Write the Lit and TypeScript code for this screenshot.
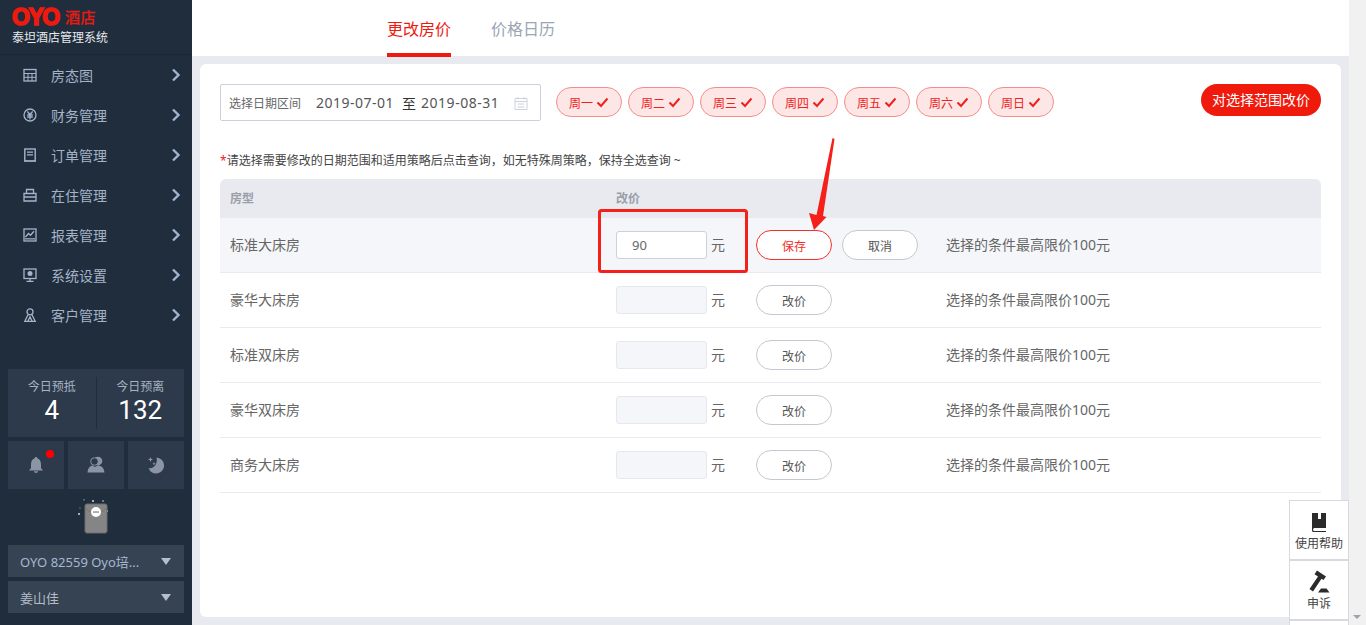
import { LitElement, css, html, svg } from "lit";
import { customElement } from "lit/decorators.js";

const navIcons = [
  svg`<rect x="1" y="1.500" width="12" height="11.500" fill="none" stroke="currentColor" stroke-width="1.300"/><path d="M1 5.500h12M5 5.500v7.500M9 5.500v7.500M1 9.300h12" stroke="currentColor" fill="none"/>`,
  svg`<circle cx="7" cy="7" r="6" fill="none" stroke="currentColor" stroke-width="1.300"/><path d="M4.400 3.500 7 6.500l2.600-3M4.200 7h5.600M4.200 9h5.600M7 6.500V11.500" fill="none" stroke="currentColor" stroke-width="1.300"/>`,
  svg`<rect x="1.800" y="1" width="10.400" height="12" fill="none" stroke="currentColor" stroke-width="1.400"/><path d="M4 4.200h6M4 6.800h6M1 13h12" stroke="currentColor" stroke-width="1.200" fill="none"/>`,
  svg`<path d="M3.500 5V1.500h7V5M1 5.500h12v7.500H1zM1 9h12" fill="none" stroke="currentColor" stroke-width="1.300"/>`,
  svg`<rect x="1" y="1" width="12" height="12" fill="none" stroke="currentColor" stroke-width="1.300"/><path d="M2.500 9 5.500 5.500l2 1.800 3.500-4M2 10.800h10" fill="none" stroke="currentColor" stroke-width="1.300"/>`,
  svg`<rect x="1" y="1" width="12" height="9.500" fill="none" stroke="currentColor" stroke-width="1.300"/><circle cx="7" cy="5.500" r="2.500" fill="currentColor"/><path d="M7 10.500v3M3.500 13.300h7" stroke="currentColor" stroke-width="1.300"/>`,
  svg`<circle cx="7" cy="3.800" r="3" fill="none" stroke="currentColor" stroke-width="1.300"/><path d="M5 6.800 1.800 13.300h10.400L9 6.800M4.800 13.300 7 9l2.200 4.300" fill="none" stroke="currentColor" stroke-width="1.300"/>`,
];

const navItems = ["房态图", "财务管理", "订单管理", "在住管理", "报表管理", "系统设置", "客户管理"];
const weekDays = ["周一", "周二", "周三", "周四", "周五", "周六", "周日"];
const rooms = ["标准大床房", "豪华大床房", "标准双床房", "豪华双床房", "商务大床房"];

@customElement("side-bar")
class SideBar extends LitElement {
  static styles = css`
    :host {
      display: flex;
      flex-direction: column;
      flex: none;
      width: 192px;
      height: 625px;
      background: #1f2d3d;
    }
    .brand {
      height: 55px;
      box-sizing: border-box;
      padding: 5px 0 0 12px;
      border-bottom: 1px solid #1a2633;
    }
    .logo {
      display: flex;
      align-items: center;
      height: 24px;
      color: #ee1a0f;
    }
    .oyo {
      width: 53px;
      font: bold 23px/24px "Liberation Sans", sans-serif;
      letter-spacing: -1.500px;
      -webkit-text-stroke: 1.600px #ee1a0f;
    }
    .hotel {
      font-size: 15px;
      line-height: 24px;
      letter-spacing: 0.500px;
      -webkit-text-stroke: 0.300px #ee1a0f;
    }
    .system {
      margin-top: 1px;
      color: #e6e9ed;
      font-size: 12px;
      line-height: 16px;
    }
    .nav {
      height: 281px;
    }
    .nav-item {
      display: flex;
      align-items: center;
      height: 40px;
      padding-left: 23px;
      color: #a4b3c6;
      font-size: 14px;
    }
    .nav-item svg.icon {
      width: 14px;
      height: 14px;
      margin-right: 14px;
      color: #a4b5cb;
    }
    .nav-item svg.chev {
      width: 10px;
      height: 14px;
      margin-left: auto;
      margin-right: 11px;
      color: #9fb4d0;
    }
    .stats {
      display: flex;
      align-items: center;
      height: 68px;
      margin: 33px 8px 0;
      background: #2c3a4b;
    }
    .stat {
      flex: 1;
      height: 52px;
      padding-top: 1px;
      box-sizing: border-box;
      text-align: center;
      color: #a7b3c2;
      font-size: 12px;
      line-height: 18px;
    }
    .stat + .stat {
      border-left: 1px solid #1f2d3d;
    }
    .stat b {
      display: block;
      color: #fff;
      font-family: Roboto, sans-serif;
      font-size: 26px;
      font-weight: 400;
      line-height: 28px;
    }
    .tools {
      display: flex;
      gap: 4px;
      margin: 4px 8px 0;
    }
    .tool {
      position: relative;
      display: flex;
      align-items: center;
      justify-content: center;
      flex: 1;
      height: 48px;
      background: #2c3a4b;
      color: #8b95a5;
    }
    .tool svg {
      width: 18px;
      height: 18px;
    }
    .dot {
      position: absolute;
      top: 9px;
      left: 38px;
      width: 8px;
      height: 8px;
      border-radius: 50%;
      background: #f00;
    }
    .gift {
      display: flex;
      justify-content: center;
      height: 56px;
    }
    .gift svg {
      width: 36px;
      height: 44px;
      margin-top: 10px;
    }
    .select {
      display: flex;
      align-items: center;
      height: 32px;
      margin: 0 8px 4px;
      padding: 0 13px 0 12px;
      background: #364353;
      color: #a6b8d0;
      font-size: 13px;
    }
    .select.user {
      color: #b5bcc6;
    }
    .select i {
      width: 0;
      height: 0;
      margin-left: auto;
      border-left: 5px solid transparent;
      border-right: 5px solid transparent;
      border-top: 7px solid #b4bfcd;
    }
  `;

  render() {
    return html`
      <div class="brand">
        <div class="logo"><span class="oyo">OYO</span><span class="hotel">酒店</span></div>
        <div class="system">泰坦酒店管理系统</div>
      </div>
      <div class="nav">
        ${navItems.map(
          (label, i) => html`<div class="nav-item">
            <svg class="icon" viewBox="0 0 14 14">${navIcons[i]}</svg>
            <span>${label}</span>
            <svg class="chev" viewBox="0 0 10 14"><path d="M2 1.500 7.500 7 2 12.500" fill="none" stroke="currentColor" stroke-width="2.400"/></svg>
          </div>`,
        )}
      </div>
      <div class="stats">
        <div class="stat">今日预抵<b>4</b></div>
        <div class="stat">今日预离<b>132</b></div>
      </div>
      <div class="tools">
        <div class="tool">
          <svg viewBox="0 0 18 18"><path d="M9 1c.8 0 1.200.5 1.300 1.200C13 3 14 5.500 14 8.500V12l2 2.500H2L4 12V8.500C4 5.500 5 3 7.700 2.200 7.800 1.500 8.200 1 9 1zM7 15.300h4c0 1-.8 1.700-2 1.700s-2-.7-2-1.700z" fill="currentColor"/></svg>
          <span class="dot"></span>
        </div>
        <div class="tool">
          <svg viewBox="0 0 18 18"><circle cx="11" cy="5" r="4.300" fill="currentColor"/><circle cx="7.500" cy="5.500" r="3.800" fill="#2c3a4b" stroke="#8b95a5"/><path d="M.5 16.500c.3-4.500 2.500-6.500 5-7l2.500 1.500 2.500-1.500c4 0 6.500 2.500 7 7z" fill="currentColor"/></svg>
        </div>
        <div class="tool">
          <svg viewBox="0 0 18 18"><path d="M9.500 1.500a8 8 0 1 1-8 10.500C6.500 13.500 11 8 9.500 1.500z" fill="currentColor"/><path d="M3.500 1 4.200 2.800 6 3.500 4.200 4.200 3.500 6 2.800 4.200 1 3.500 2.800 2.800zM7 6l.5 1.200 1.200.5-1.200.5L7 9.500l-.5-1.300-1.200-.5 1.200-.5z" fill="currentColor"/></svg>
        </div>
      </div>
      <div class="gift">
        <svg viewBox="0 0 36 44">
          <g fill="#d5d9de"><circle cx="6" cy="0.800" r=".6"/><circle cx="15" cy="2" r="1"/><circle cx="25" cy="2" r=".8"/><circle cx="1" cy="15" r="1"/><circle cx="2" cy="9" r=".5"/><circle cx="29" cy="12" r="1"/></g>
          <rect x="7" y="5" width="22" height="29" rx="2" fill="#858585" stroke="#6d6d6d"/>
          <path d="M7.500 9c3 3 6 5 10.500 5s7.500-2 10.500-5" fill="none" stroke="#767676"/>
          <circle cx="18" cy="13" r="5" fill="#fff"/>
          <rect x="15" y="12.300" width="6" height="1.500" fill="#9a9a9a"/>
        </svg>
      </div>
      <div class="select"><span>OYO 82559 Oyo培...</span><i></i></div>
      <div class="select user"><span>姜山佳</span><i></i></div>
    `;
  }
}

@customElement("price-table")
class PriceTable extends LitElement {
  static styles = css`
    :host {
      display: block;
      margin-top: 9px;
      font-size: 14px;
      color: #666;
    }
    .head,
    .row {
      display: flex;
      align-items: center;
      padding-left: 10px;
    }
    .head {
      height: 39px;
      padding-bottom: 2px;
      box-sizing: border-box;
      border-radius: 6px 6px 0 0;
      background: #e9eaef;
      color: #9a9ea9;
      font-size: 12px;
      font-weight: 700;
    }
    .row {
      height: 54px;
      border-bottom: 1px solid #e9eaef;
    }
    .row.active {
      background: #f5f6fa;
    }
    .name {
      flex: none;
      width: 386px;
    }
    .label {
      padding-bottom: 2px;
    }
    .input {
      flex: none;
      box-sizing: border-box;
      width: 91px;
      height: 28px;
      padding-left: 15px;
      border: 1px solid #e6e8ee;
      border-radius: 3px;
      background: #f5f6fa;
      line-height: 26px;
      font-size: 13px;
    }
    .active .input {
      border-color: #ccd0da;
      background: #fff;
    }
    .unit {
      flex: none;
      width: 49px;
      padding-left: 4px;
      box-sizing: border-box;
    }
    .actions {
      display: flex;
      flex: none;
      gap: 10px;
      width: 190px;
    }
    button {
      width: 76px;
      height: 30px;
      padding: 2px 0 0;
      border: 1px solid #c6c8cf;
      border-radius: 15px;
      background: #fff;
      color: #555;
      font: inherit;
      font-size: 12px;
    }
    button.save {
      border-color: #f0302a;
      color: #f0302a;
    }
  `;

  render() {
    return html`
      <div class="head"><span class="name">房型</span><span>改价</span></div>
      ${rooms.map(
        (room, i) => html`<div class="row ${i === 0 ? "active" : ""}">
          <span class="name label">${room}</span>
          <div class="input">${i === 0 ? "90" : ""}</div>
          <span class="unit label">元</span>
          <div class="actions">
            ${i === 0
              ? html`<button class="save">保存</button><button>取消</button>`
              : html`<button>改价</button>`}
          </div>
          <span class="label">选择的条件最高限价100元</span>
        </div>`,
      )}
    `;
  }
}

@customElement("app-root")
export class AppRoot extends LitElement {
  static styles = css`
    :host {
      display: flex;
      position: relative;
      width: 1366px;
      height: 625px;
      overflow: hidden;
      background: #e9eaef;
      font-family: "Noto Sans", "Noto Sans CJK SC", sans-serif;
    }
    .main {
      flex: 1;
      min-width: 0;
    }
    .tabs {
      display: flex;
      gap: 40px;
      height: 56px;
      padding-left: 195px;
      background: #fff;
    }
    .tab {
      height: 53px;
      line-height: 58px;
      font-size: 16px;
      color: #9aa5b5;
    }
    .tab.on {
      border-bottom: 4px solid #ee1a0f;
      color: #ee1a0f;
    }
    .card {
      height: 553px;
      box-sizing: border-box;
      margin: 8px 8px 0;
      padding: 20px;
      border-radius: 6px;
      background: #fff;
    }
    .filters {
      display: flex;
      align-items: flex-start;
    }
    .range {
      display: flex;
      align-items: center;
      flex: none;
      box-sizing: border-box;
      width: 321px;
      height: 37px;
      padding-left: 8px;
      border: 1px solid #ccd0da;
      border-radius: 2px;
      color: #555;
      font-size: 14px;
    }
    .range .label {
      width: 87px;
      font-size: 12px;
      color: #666;
    }
    .range .date {
      letter-spacing: 0.500px;
    }
    .range .to {
      margin: 0 5px 0 8px;
      color: #333;
    }
    .range svg {
      width: 14px;
      height: 14px;
      margin-left: 15px;
      color: #cdd1da;
    }
    .pills {
      display: flex;
      gap: 6px;
      margin: 3px 0 0 15px;
    }
    .pill {
      display: flex;
      align-items: center;
      justify-content: center;
      gap: 3px;
      box-sizing: border-box;
      width: 66px;
      height: 30px;
      padding-top: 1px;
      border: 1px solid #f78d88;
      border-radius: 15px;
      background: #fde6e6;
      color: #f0201a;
      font-size: 12px;
    }
    .pill svg {
      width: 13px;
      height: 11px;
    }
    .apply {
      flex: none;
      width: 120px;
      height: 32px;
      margin-left: auto;
      padding: 0 0 2px;
      border: 0;
      border-radius: 16px;
      background: #f01a0c;
      color: #fff;
      font: inherit;
      font-size: 14px;
    }
    .hint {
      margin-top: 31px;
      font-size: 12px;
      line-height: 18px;
      color: #444;
    }
    .hint em {
      color: #f0201a;
      font-style: normal;
    }
    .scrollbar {
      position: relative;
      flex: none;
      width: 17px;
      background: #f1f1f1;
    }
    .scrollbar i {
      position: absolute;
      left: 4px;
      bottom: 6px;
      width: 0;
      height: 0;
      border-left: 4px solid transparent;
      border-right: 4px solid transparent;
      border-top: 4px solid #a3a3a3;
    }
    .help {
      position: absolute;
      top: 500px;
      right: 17px;
      box-sizing: border-box;
      width: 60px;
      height: 125px;
      border: 1px solid #d8d9e0;
      border-bottom: 0;
      background: #fff;
      color: #444;
      font-size: 12px;
      text-align: center;
    }
    .help div {
      box-sizing: border-box;
      height: 60px;
      padding-top: 9px;
      border-bottom: 2px solid #d8d9e0;
      line-height: 18px;
    }
    .help svg {
      display: block;
      width: 24px;
      height: 24px;
      margin: 0 auto 1px;
    }
    .marks {
      position: absolute;
      inset: 0;
      width: 1366px;
      height: 625px;
      pointer-events: none;
    }
  `;

  render() {
    return html`
      <side-bar></side-bar>
      <div class="main">
        <div class="tabs">
          <div class="tab on">更改房价</div>
          <div class="tab">价格日历</div>
        </div>
        <div class="card">
          <div class="filters">
            <div class="range">
              <span class="label">选择日期区间</span>
              <span class="date">2019-07-01</span><span class="to">至</span><span class="date">2019-08-31</span>
              <svg viewBox="0 0 14 14"><path d="M1 2.500h12v11H1zM1 5.500h12M4 1v2.500M10 1v2.500M3.500 8h7M3.500 11h7" fill="none" stroke="currentColor"/></svg>
            </div>
            <div class="pills">
              ${weekDays.map(
                (d) => html`<div class="pill">
                  <span>${d}</span>
                  <svg viewBox="0 0 13 11"><path d="M1.500 5.500 5 9l6.500-7.500" fill="none" stroke="currentColor" stroke-width="2"/></svg>
                </div>`,
              )}
            </div>
            <button class="apply">对选择范围改价</button>
          </div>
          <div class="hint"><em>*</em>请选择需要修改的日期范围和适用策略后点击查询，如无特殊周策略，保持全选查询 ~</div>
          <price-table></price-table>
        </div>
      </div>
      <div class="scrollbar"><i></i></div>
      <div class="help">
        <div>
          <svg viewBox="0 0 24 24"><path d="M5 3h14v15H7.500a1.500 1.500 0 0 0 0 3H19v1H6.500A1.500 1.500 0 0 1 5 20.500z" fill="#2b2b2b"/><rect x="11" y="3" width="3" height="6" fill="#fff"/></svg>
          使用帮助
        </div>
        <div>
          <svg viewBox="0 0 24 24"><path d="M10 0.500 19 6.500 16.500 10 14.500 8.700 6 21.500 2.500 19 11 6.500 7.500 4.200zM14 18.500h5.500l3 4H11z" fill="#2b2b2b"/></svg>
          申诉
        </div>
      </div>
      <svg class="marks" viewBox="0 0 1366 625">
        <rect x="599.500" y="210.500" width="147" height="61" rx="2" fill="none" stroke="#f5201a" stroke-width="3"/>
        <path d="M832.500 138 834.500 139 823 216 826.500 217 814 230 809 213 816.500 215z" fill="#f5201a"/>
      </svg>
    `;
  }
}
